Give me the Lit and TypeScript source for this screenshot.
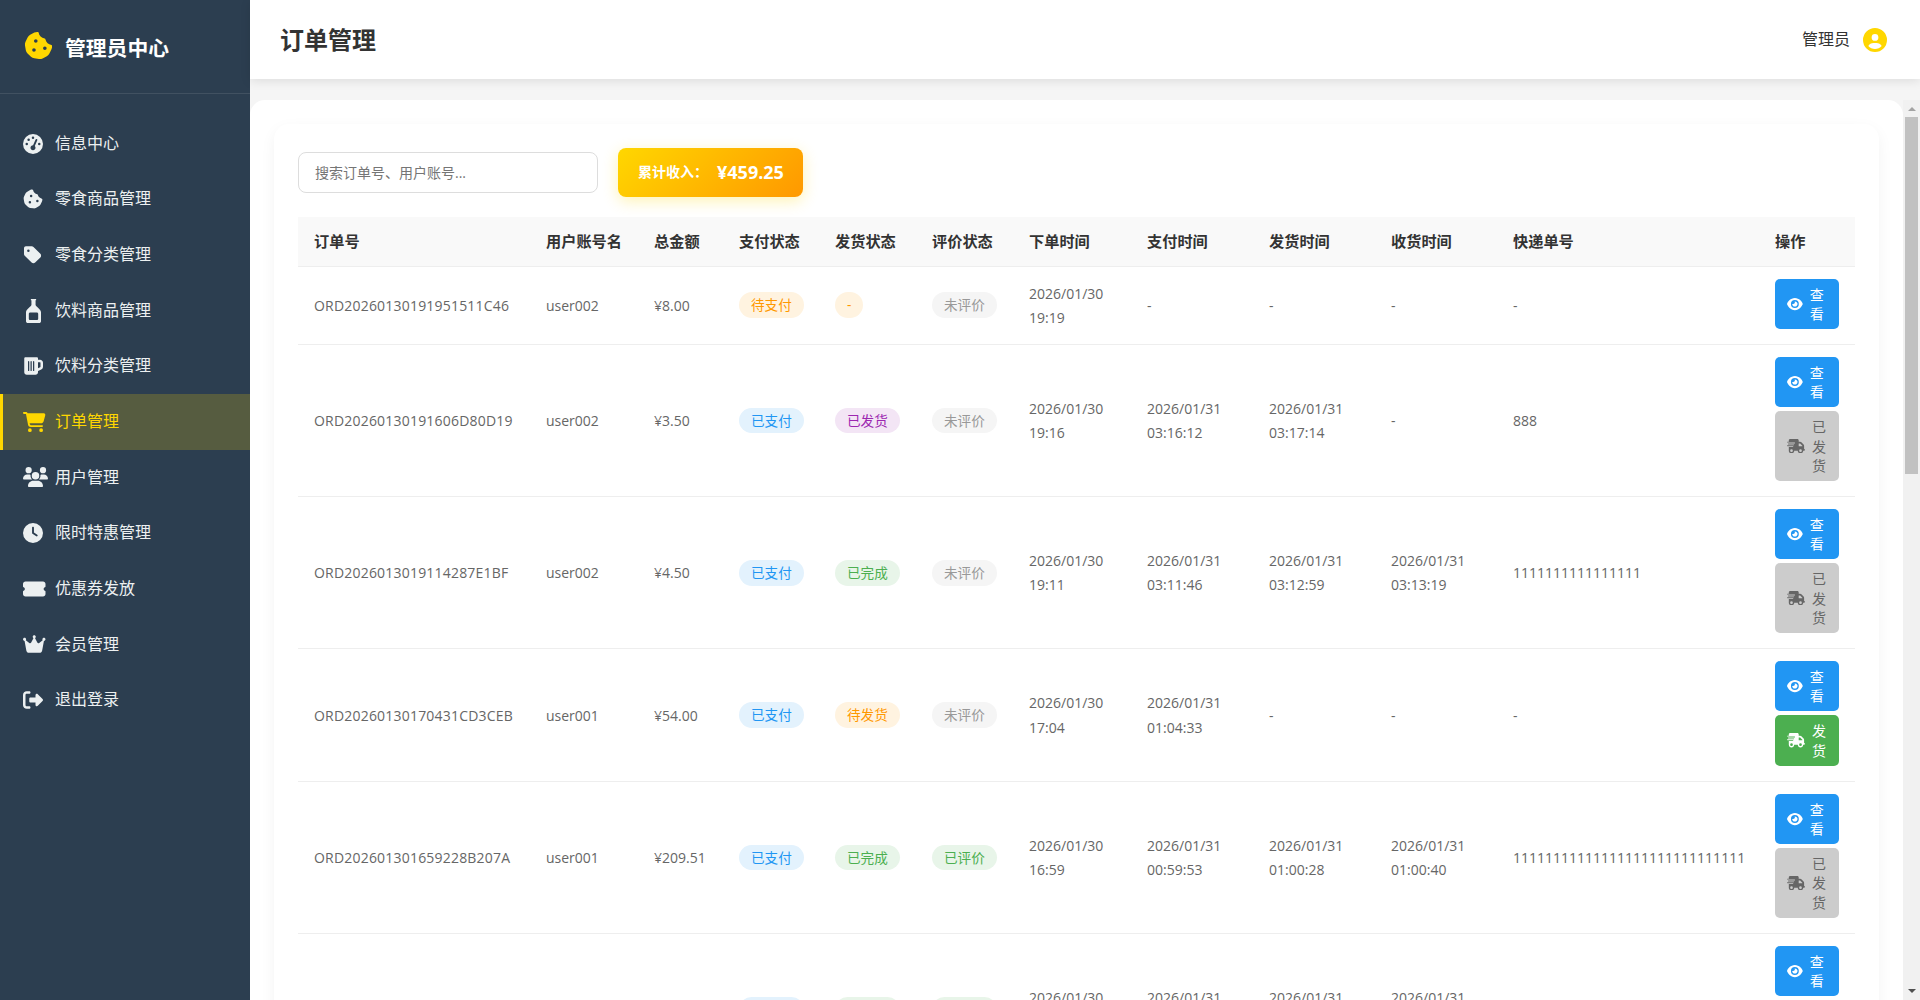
import { LitElement, html, css, svg } from "lit";
import { customElement } from "lit/decorators.js";

const P: Record<string, [string, string]> = {
  gauge: ["0 0 512 512", "M0 256a256 256 0 1 1 512 0A256 256 0 1 1 0 256zM288 96a32 32 0 1 0 -64 0 32 32 0 1 0 64 0zM256 416c35.3 0 64-28.7 64-64c0-17.4-6.9-33.1-18.1-44.6L366 161.7c5.3-12.1-.2-26.3-12.3-31.6s-26.3 .2-31.6 12.3L257.9 288c-.6 0-1.3 0-1.9 0c-35.3 0-64 28.7-64 64s28.7 64 64 64zM176 144a32 32 0 1 0 -64 0 32 32 0 1 0 64 0zM96 288a32 32 0 1 0 0-64 32 32 0 1 0 0 64zm352-32a32 32 0 1 0 -64 0 32 32 0 1 0 64 0z"],
  cookie: ["0 0 512 512", "M257.5 27.6c-.8-5.4-4.9-9.8-10.3-10.6c-22.1-3.1-44.6 .9-64.4 11.4l-74 39.5C89.1 78.4 73.2 94.9 63.4 115L26.7 190.6c-9.8 20.1-13 42.9-9.1 64.9l14.5 82.8c3.9 22.1 14.6 42.3 30.7 57.9l60.3 58.4c16.1 15.6 36.6 25.6 58.7 28.7l83 11.7c22.1 3.1 44.6-.9 64.4-11.4l74-39.5c19.7-10.5 35.6-27 45.4-47.2l36.7-75.5c9.8-20.1 13-42.9 9.1-64.9c-.9-5.3-5.3-9.3-10.6-10.1c-51.5-8.2-92.8-47.1-104.5-97.4c-1.8-7.6-8-13.4-15.7-14.6c-54.6-8.7-97.7-52-106.2-106.8zM208 144a32 32 0 1 1 0 64 32 32 0 1 1 0-64zM144 336a32 32 0 1 1 64 0 32 32 0 1 1 -64 0zm224-64a32 32 0 1 1 0 64 32 32 0 1 1 0-64z"],
  tag: ["0 0 448 512", "M0 80V229.5c0 17 6.7 33.3 18.7 45.3l176 176c25 25 65.5 25 90.5 0L418.7 317.3c25-25 25-65.5 0-90.5l-176-176c-12-12-28.3-18.7-45.3-18.7H48C21.5 32 0 53.5 0 80zm112 32a32 32 0 1 1 0 64 32 32 0 1 1 0-64z"],
  bottle: ["0 0 320 512", "M104 0h112v24h-12v96c0 40 116 90 116 160v192c0 22-18 40-40 40H40c-22 0-40-18-40-40V280c0-70 116-120 116-160V24h-12zM90 290c-17 0-30 13-30 30v100c0 17 13 30 30 30h140c17 0 30-13 30-30V320c0-17-13-30-30-30z"],
  mug: ["0 0 512 512", "M32 64c0-17.7 14.3-32 32-32H352c17.7 0 32 14.3 32 32V96h51.2c42.4 0 76.8 34.4 76.8 76.8V274.9c0 30.4-17.9 57.9-45.6 70.2L384 381.7V416c0 35.3-28.7 64-64 64H96c-35.3 0-64-28.7-64-64V64zM384 311.6l56.4-25.1c4.6-2.1 7.6-6.6 7.6-11.7V172.8c0-7.1-5.7-12.8-12.8-12.8H384V311.6zM160 144c0-8.8-7.2-16-16-16s-16 7.2-16 16V368c0 8.8 7.2 16 16 16s16-7.2 16-16V144zm64 0c0-8.8-7.2-16-16-16s-16 7.2-16 16V368c0 8.8 7.2 16 16 16s16-7.2 16-16V144zm64 0c0-8.8-7.2-16-16-16s-16 7.2-16 16V368c0 8.8 7.2 16 16 16s16-7.2 16-16V144z"],
  cart: ["0 0 576 512", "M0 24C0 10.7 10.7 0 24 0H69.5c22 0 41.5 12.8 50.6 32h411c26.3 0 45.5 25 38.6 50.4l-41 152.3c-8.5 31.4-37 53.3-69.5 53.3H170.7l5.4 28.5c2.2 11.3 12.1 19.5 23.6 19.5H488c13.3 0 24 10.7 24 24s-10.7 24-24 24H199.7c-34.6 0-64.3-24.6-70.7-58.5L77.4 54.5c-.7-3.8-4-6.5-7.9-6.5H24C10.7 48 0 37.3 0 24zM128 464a48 48 0 1 1 96 0 48 48 0 1 1 -96 0zm336-48a48 48 0 1 1 0 96 48 48 0 1 1 0-96z"],
  users: ["0 0 640 512", "M144 0a80 80 0 1 1 0 160A80 80 0 1 1 144 0zM512 0a80 80 0 1 1 0 160A80 80 0 1 1 512 0zM0 298.7C0 239.8 47.8 192 106.7 192h42.7c15.9 0 31 3.5 44.6 9.7c-1.3 7.2-1.9 14.7-1.9 22.3c0 38.2 16.8 72.5 43.3 96c-.2 0-.4 0-.7 0H21.3C9.6 320 0 310.4 0 298.7zM405.3 320c-.2 0-.4 0-.7 0c26.6-23.5 43.3-57.8 43.3-96c0-7.6-.7-15-1.9-22.3c13.6-6.3 28.7-9.7 44.6-9.7h42.7C592.2 192 640 239.8 640 298.7c0 11.8-9.6 21.3-21.3 21.3H405.3zM224 224a96 96 0 1 1 192 0 96 96 0 1 1 -192 0zM128 485.3C128 411.7 187.7 352 261.3 352H378.7C452.3 352 512 411.7 512 485.3c0 14.7-11.9 26.7-26.7 26.7H154.7c-14.7 0-26.7-11.9-26.7-26.7z"],
  clock: ["0 0 512 512", "M256 0a256 256 0 1 1 0 512A256 256 0 1 1 256 0zM232 120V256c0 8 4 15.5 10.7 20l96 64c11 7.4 25.9 4.4 33.3-6.7s4.4-25.9-6.7-33.3L280 243.2V120c0-13.3-10.7-24-24-24s-24 10.7-24 24z"],
  ticket: ["0 0 576 512", "M0 128C0 92.7 28.7 64 64 64H512c35.3 0 64 28.7 64 64v64c0 8.8-7.4 15.7-15.7 18.6C541.5 217.1 528 235 528 256s13.5 38.9 32.3 45.4c8.3 2.9 15.7 9.8 15.7 18.6v64c0 35.3-28.7 64-64 64H64c-35.3 0-64-28.7-64-64V320c0-8.8 7.4-15.7 15.7-18.6C34.5 294.9 48 277 48 256s-13.5-38.9-32.3-45.4C7.4 207.7 0 200.8 0 192V128z"],
  crown: ["0 0 576 512", "M309 106c11.4-7 19-19.7 19-34c0-22.1-17.9-40-40-40s-40 17.9-40 40c0 14.4 7.6 27 19 34L209.7 220.6c-9.1 18.2-32.7 23.4-48.6 10.7L72 160c5-6.7 8-15 8-24c0-22.1-17.9-40-40-40S0 113.9 0 136s17.9 40 40 40c.2 0 .5 0 .7 0L86.4 427.4c5.5 30.4 32 52.6 63 52.6H426.6c30.9 0 57.4-22.1 63-52.6L535.3 176c.2 0 .5 0 .7 0c22.1 0 40-17.9 40-40s-17.9-40-40-40s-40 17.9-40 40c0 9 3 17.3 8 24l-89.1 71.3c-15.9 12.7-39.5 7.5-48.6-10.7L309 106z"],
  logout: ["0 0 512 512", "M377.9 105.9L500.7 228.7c7.2 7.2 11.3 17.1 11.3 27.3s-4.1 20.1-11.3 27.3L377.9 406.1c-6.4 6.4-15 9.9-24 9.9c-18.7 0-33.9-15.2-33.9-33.9l0-62.1-128 0c-17.7 0-32-14.3-32-32l0-64c0-17.7 14.3-32 32-32l128 0 0-62.1c0-18.7 15.2-33.9 33.9-33.9c9 0 17.6 3.6 24 9.9zM160 96L96 96c-17.7 0-32 14.3-32 32l0 256c0 17.7 14.3 32 32 32l64 0c17.7 0 32 14.3 32 32s-14.3 32-32 32l-64 0c-53 0-96-43-96-96L0 128C0 75 43 32 96 32l64 0c17.7 0 32 14.3 32 32s-14.3 32-32 32z"],
  eye: ["0 0 576 512", "M288 32c-80.8 0-145.5 36.8-192.6 80.6C48.6 156 17.3 208 2.5 243.7c-3.3 7.9-3.3 16.7 0 24.6C17.3 304 48.6 356 95.4 399.4C142.5 443.2 207.2 480 288 480s145.5-36.8 192.6-80.6c46.8-43.5 78.1-95.4 93-131.1c3.3-7.9 3.3-16.7 0-24.6c-14.9-35.7-46.2-87.7-93-131.1C433.5 68.8 368.8 32 288 32zM144 256a144 144 0 1 1 288 0 144 144 0 1 1 -288 0zm144-64c0 35.3-28.7 64-64 64c-7.1 0-13.9-1.2-20.3-3.3c-5.5-1.8-11.9 1.6-11.7 7.4c.3 6.9 1.3 13.8 3.2 20.7c13.7 51.2 66.4 81.6 117.6 67.9s81.6-66.4 67.9-117.6c-11.1-41.5-47.8-69.4-88.6-71.1c-5.8-.2-9.2 6.1-7.4 11.7c2.1 6.4 3.3 13.2 3.3 20.3z"],
  truck: ["0 0 640 512", "M112 0C85.5 0 64 21.5 64 48V96H16c-8.8 0-16 7.2-16 16s7.2 16 16 16H64 272c8.8 0 16 7.2 16 16s-7.2 16-16 16H64 48c-8.8 0-16 7.2-16 16s7.2 16 16 16H64 240c8.8 0 16 7.2 16 16s-7.2 16-16 16H64 16c-8.8 0-16 7.2-16 16s7.2 16 16 16H64 208c8.8 0 16 7.2 16 16s-7.2 16-16 16H64V416c0 53 43 96 96 96s96-43 96-96H384c0 53 43 96 96 96s96-43 96-96h32c17.7 0 32-14.3 32-32s-14.3-32-32-32V288 256 237.3c0-17-6.7-33.3-18.7-45.3L512 114.7c-12-12-28.3-18.7-45.3-18.7H416V48c0-26.5-21.5-48-48-48H112zM544 237.3V256H416V160h50.7L544 237.3zM160 368a48 48 0 1 1 0 96 48 48 0 1 1 0-96zm272 48a48 48 0 1 1 96 0 48 48 0 1 1 -96 0z"],
  user: ["0 0 512 512", "M399 384.2C376.9 345.8 335.4 320 288 320H224c-47.4 0-88.9 25.8-111 64.2c35.2 39.2 86.2 63.8 143 63.8s107.8-24.7 143-63.8zM0 256a256 256 0 1 1 512 0A256 256 0 1 1 0 256zm256 16a72 72 0 1 0 0-144 72 72 0 1 0 0 144z"],
};

function icon(name: string, h: number) {
  const [vb, d] = P[name];
  const parts = vb.split(" ").map(Number);
  const w = (parts[2] / parts[3]) * h;
  return html`<svg class="ic" viewBox=${vb} width=${w} height=${h} fill="currentColor" fill-rule="evenodd">${svg`<path d=${d}></path>`}</svg>`;
}

const NAV: [string, string, number][] = [
  ["gauge", "信息中心", 20], ["cookie", "零食商品管理", 20], ["tag", "零食分类管理", 20], ["bottle", "饮料商品管理", 24],
  ["mug", "饮料分类管理", 20], ["cart", "订单管理", 20], ["users", "用户管理", 20], ["clock", "限时特惠管理", 20],
  ["ticket", "优惠券发放", 20], ["crown", "会员管理", 20], ["logout", "退出登录", 20],
];

const HEAD: [string, number][] = [
  ["订单号", 233], ["用户账号名", 108], ["总金额", 85], ["支付状态", 96], ["发货状态", 97], ["评价状态", 97],
  ["下单时间", 118], ["支付时间", 122], ["发货时间", 122], ["收货时间", 122], ["快递单号", 262], ["操作", 95],
];

type B = [string, string];
const PAID: B = ["已支付", "blue"], WAIT: B = ["待支付", "orange"], DASH: B = ["-", "orange"];
const SHIPPED: B = ["已发货", "purple"], DONE: B = ["已完成", "green"], TOSHIP: B = ["待发货", "orange"];
const NOREV: B = ["未评价", "gray"], REV: B = ["已评价", "green"];

interface Row { id: string; user: string; total: string; pay: B; ship: B; rev: B; t1: string[]; t2: string[]; t3: string[]; t4: string[]; no: string; btn: "" | "done" | "ship"; }

const NONE = ["-"];
const ROWS: Row[] = [
  { id: "ORD20260130191951511C46", user: "user002", total: "¥8.00", pay: WAIT, ship: DASH, rev: NOREV, t1: ["2026/01/30", "19:19"], t2: NONE, t3: NONE, t4: NONE, no: "-", btn: "" },
  { id: "ORD20260130191606D80D19", user: "user002", total: "¥3.50", pay: PAID, ship: SHIPPED, rev: NOREV, t1: ["2026/01/30", "19:16"], t2: ["2026/01/31", "03:16:12"], t3: ["2026/01/31", "03:17:14"], t4: NONE, no: "888", btn: "done" },
  { id: "ORD2026013019114287E1BF", user: "user002", total: "¥4.50", pay: PAID, ship: DONE, rev: NOREV, t1: ["2026/01/30", "19:11"], t2: ["2026/01/31", "03:11:46"], t3: ["2026/01/31", "03:12:59"], t4: ["2026/01/31", "03:13:19"], no: "1111111111111111", btn: "done" },
  { id: "ORD20260130170431CD3CEB", user: "user001", total: "¥54.00", pay: PAID, ship: TOSHIP, rev: NOREV, t1: ["2026/01/30", "17:04"], t2: ["2026/01/31", "01:04:33"], t3: NONE, t4: NONE, no: "-", btn: "ship" },
  { id: "ORD202601301659228B207A", user: "user001", total: "¥209.51", pay: PAID, ship: DONE, rev: REV, t1: ["2026/01/30", "16:59"], t2: ["2026/01/31", "00:59:53"], t3: ["2026/01/31", "01:00:28"], t4: ["2026/01/31", "01:00:40"], no: "11111111111111111111111111111", btn: "done" },
  { id: "ORD20260130165102A41C7E", user: "user001", total: "¥12.00", pay: PAID, ship: DONE, rev: REV, t1: ["2026/01/30", "16:51"], t2: ["2026/01/31", "00:51:20"], t3: ["2026/01/31", "00:52:03"], t4: ["2026/01/31", "00:52:41"], no: "111111", btn: "done" },
];

@customElement("app-root")
export class AppRoot extends LitElement {
  static styles = css`
    :host { display: block; height: 1000px; font-family: "Open Sans", "Noto Sans CJK SC", sans-serif; font-size: 14px; line-height: 1.6; color: #333; }
    * { box-sizing: border-box; }
    .shell { display: flex; height: 1000px; background: #f5f5f5; overflow: hidden; }
    .side { width: 250px; flex: none; background: #2c3e50; color: #fff; }
    .brand { height: 94px; display: flex; align-items: center; gap: 12px; padding: 0 24px; border-bottom: 1px solid rgba(255,255,255,.1); font-size: 20.8px; font-weight: 700; color: #fff; }
    .brand .ic { color: #ffd700; display: block; flex: none; margin-top: -2px; }
    .brand span { margin-top: 4px; }
    .nav { padding: 21.8px 0 20px; }
    .item { display: flex; align-items: center; gap: 12px; padding: 15px 20px; border-left: 3px solid transparent; font-size: 16px; line-height: 25.6px; height: 55.65px; color: #ecf0f1; }
    .item.on { background: rgba(255,215,0,.2); border-left-color: #ffd700; color: #ffd700; }
    .ib { width: 20px; flex: none; display: block; }
    .ib .ic { display: block; margin: 0 auto; }
    .main { flex: 1; min-width: 0; display: flex; flex-direction: column; }
    .top { height: 79px; flex: none; background: #fff; box-shadow: 0 2px 10px rgba(0,0,0,.1); display: flex; align-items: center; justify-content: space-between; padding: 1px 33px 0 30px; position: relative; z-index: 1; }
    .top h1 { margin: 0; font-size: 24px; font-weight: 700; color: #333; line-height: 1.6; }
    .who { display: flex; align-items: center; gap: 13px; font-size: 16px; color: #333; }
    .who .ic { color: #ffd700; display: block; }
    .body { flex: 1; min-height: 0; margin-top: 21px; display: flex; }
    .scroll { flex: 1; min-width: 0; overflow-y: scroll; }
    .bar-y { width: 17px; flex: none; background: #f1f1f1; display: flex; flex-direction: column; align-items: center; }
    .arrow { width: 0; height: 0; flex: none; border-left: 4px solid transparent; border-right: 4px solid transparent; }
    .arrow.up { border-bottom: 4px solid #a3a3a3; margin: 7px 0 6px; }
    .arrow.down { border-top: 4px solid #505050; margin: auto 0 7px; }
    .thumb { width: 13px; height: 357px; flex: none; background: #c1c1c1; }
    .panel { background: #fff; border-radius: 15px 15px 0 0; padding: 24px; }
    .card { background: #fff; border-radius: 15px; padding: 24px; box-shadow: 0 5px 15px rgba(0,0,0,.05); }
    .tools { display: flex; align-items: center; gap: 20px; margin-bottom: 20px; }
    .search { width: 300px; height: 41px; border: 1px solid #ddd; border-radius: 8px; padding: 0 16px; font: inherit; font-size: 14px; outline: none; color: #333; background: #fff; }
    .search::placeholder { color: #757575; }
    .rev { height: 49px; width: 185px; border-radius: 8px; background: linear-gradient(135deg, #ffd700, #ff9800); box-shadow: 0 4px 15px rgba(255,215,0,.3); color: #fff; display: flex; align-items: center; gap: 9px; padding: 0 20px; font-weight: 700; white-space: nowrap; }
    .rev b { font-size: 18px; font-weight: 700; }
    table { width: 1557px; table-layout: fixed; border-collapse: collapse; }
    th { height: 49px; background: #f9f9f9; border-bottom: 1px solid #eee; padding: 0 15px; text-align: left; font-size: 15.2px; font-weight: 700; color: #333; white-space: nowrap; }
    td { padding: 13px 15px 11px; border-bottom: 1px solid #eee; color: #666; line-height: 24.5px; vertical-align: middle; white-space: nowrap; }
    th:first-child { padding-left: 16px; }
    td:first-child { padding-left: 16px; letter-spacing: .2px; }
    td.ops { padding: 12px 15px 15px; }
    td.st { padding: 12px 15px; }
    .pill { display: inline-block; font-size: 13.6px; line-height: 21.8px; padding: 2px 12px; border-radius: 15px; vertical-align: middle; }
    .blue { background: #e3f2fd; color: #2196f3; }
    .orange { background: #fff3e0; color: #ff9800; }
    .purple { background: #f3e5f5; color: #9c27b0; }
    .green { background: #e8f5e9; color: #4caf50; }
    .gray { background: #f5f5f5; color: #999; }
    .stack { display: flex; flex-direction: column; gap: 4px; }
    .btn { width: 64px; display: flex; align-items: center; gap: 7px; padding: 6px 12px; border-radius: 5px; font-size: 14px; line-height: 19.2px; white-space: normal; }
    .btn span { flex: 1; min-width: 0; }
    .btn .ic { flex: none; display: block; }
    .view { background: #2196f3; color: #fff; }
    .ship { background: #4caf50; color: #fff; }
    .done { background: #ccc; color: #666; }
  `;

  private cell(t: string[]) {
    return html`<td>${t[0]}${t[1] ? html`<br />${t[1]}` : ""}</td>`;
  }

  private pill(b: B) {
    return html`<td class="st"><span class="pill ${b[1]}">${b[0]}</span></td>`;
  }

  private ops(r: Row) {
    return html`<td class="ops"><div class="stack">
      <div class="btn view">${icon("eye", 14)}<span>查看</span></div>
      ${r.btn === "done" ? html`<div class="btn done">${icon("truck", 14.4)}<span>已发货</span></div>` : ""}
      ${r.btn === "ship" ? html`<div class="btn ship">${icon("truck", 14.4)}<span>发货</span></div>` : ""}
    </div></td>`;
  }

  render() {
    return html`<div class="shell">
      <aside class="side">
        <div class="brand">${icon("cookie", 29)}<span>管理员中心</span></div>
        <nav class="nav">
          ${NAV.map(([ic, t, h]) => html`<div class="item ${t === "订单管理" ? "on" : ""}"><span class="ib">${icon(ic, h)}</span><span>${t}</span></div>`)}
        </nav>
      </aside>
      <div class="main">
        <header class="top"><h1>订单管理</h1><div class="who"><span>管理员</span>${icon("user", 24)}</div></header>
        <div class="body">
          <div class="scroll"><div class="panel"><div class="card">
            <div class="tools">
              <input class="search" placeholder="搜索订单号、用户账号..." />
              <div class="rev"><span>累计收入：</span><b>¥459.25</b></div>
            </div>
            <table>
              <colgroup>${HEAD.map(([, w]) => html`<col style="width:${w}px" />`)}</colgroup>
              <thead><tr>${HEAD.map(([t]) => html`<th>${t}</th>`)}</tr></thead>
              <tbody>${ROWS.map((r) => html`<tr>
                <td>${r.id}</td><td>${r.user}</td><td>${r.total}</td>
                ${this.pill(r.pay)}${this.pill(r.ship)}${this.pill(r.rev)}
                ${this.cell(r.t1)}${this.cell(r.t2)}${this.cell(r.t3)}${this.cell(r.t4)}
                <td>${r.no}</td>${this.ops(r)}
              </tr>`)}</tbody>
            </table>
          </div></div></div>
          <div class="bar-y"><div class="arrow up"></div><div class="thumb"></div><div class="arrow down"></div></div>
        </div>
      </div>
    </div>`;
  }
}
